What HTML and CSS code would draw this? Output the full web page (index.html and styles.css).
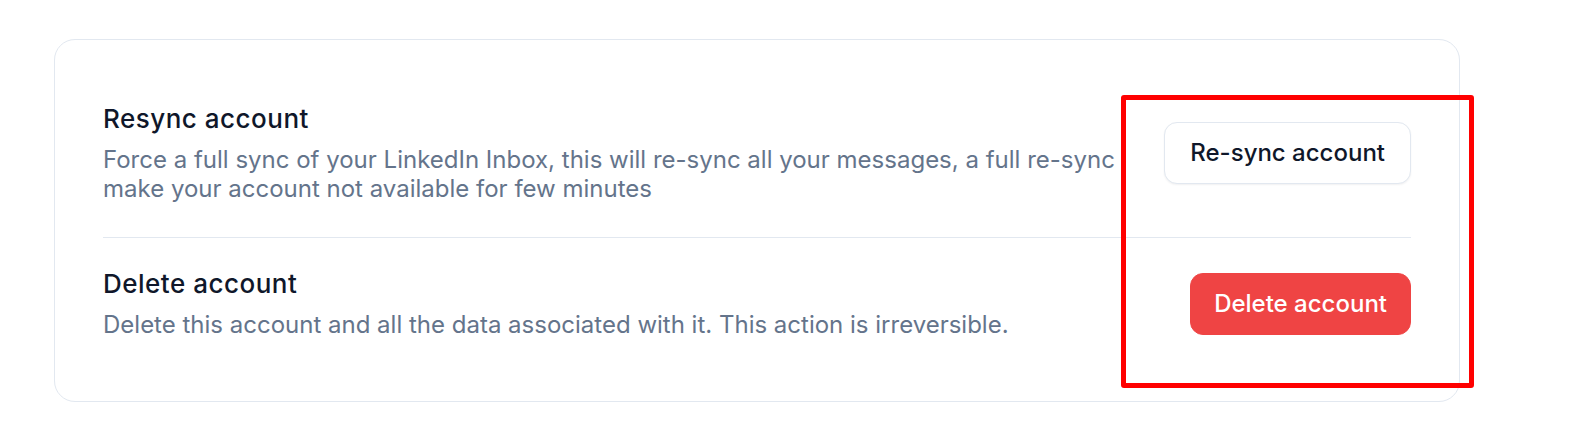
FILE: index.html
```html
<!DOCTYPE html>
<html lang="en">
<head>
<meta charset="utf-8">
<title>Account settings</title>
<link rel="stylesheet" href="styles.css">
</head>
<body>
<div class="page">
  <section class="card">
    <div class="row">
      <div class="info">
        <h3 class="title">Resync account</h3>
        <p class="desc">Force a full sync of your LinkedIn Inbox, this will re-sync all your messages, a full re-sync make your account not available for few minutes</p>
      </div>
      <button class="btn btn-outline" type="button">Re-sync account</button>
    </div>
    <div class="row row-divided">
      <div class="info">
        <h3 class="title">Delete account</h3>
        <p class="desc">Delete this account and all the data associated with it. This action is irreversible.</p>
      </div>
      <button class="btn btn-danger" type="button">Delete account</button>
    </div>
  </section>
  <div class="highlight"></div>
</div>
</body>
</html>
```

FILE: styles.css
```css
* { box-sizing: border-box; }

html, body {
  margin: 0;
  padding: 0;
  background: #ffffff;
}

body {
  font-family: Inter, "Noto Sans", "Liberation Sans", sans-serif;
  -webkit-font-smoothing: antialiased;
}

.page {
  position: relative;
  padding: 39px 0 0 54px;
  height: 434px;
}

.card {
  width: 1406px;
  border: 1px solid #e2e8f0;
  border-radius: 21px;
  padding: 33px 48px 28px 48px;
  background: #ffffff;
}

.row {
  display: flex;
  align-items: center;
  gap: 48px;
  padding: 30px 0 34px 0;
}

.row-divided {
  border-top: 1px solid #e2e8f0;
}

.info {
  flex: 1;
  min-width: 0;
}

.title {
  margin: 0;
  font-size: 26px;
  line-height: 32px;
  font-weight: 500;
  letter-spacing: 0.5px;
  color: #0f172a;
}

.desc {
  margin: 10px 0 0 0;
  font-size: 24px;
  line-height: 29px;
  font-weight: 400;
  color: #64748b;
}

.btn {
  flex: none;
  font-family: inherit;
  font-size: 24px;
  line-height: 30px;
  font-weight: 500;
  border-radius: 13px;
  padding: 15px 25px;
  cursor: pointer;
}

.btn-outline {
  background: #ffffff;
  color: #0f172a;
  border: 1px solid #e2e8f0;
  box-shadow: 0 1px 2px rgba(15, 23, 42, 0.06);
}

.btn-danger {
  background: #ef4444;
  color: #ffffff;
  border: 1px solid #ef4444;
  padding: 15px 23px;
}

.highlight {
  position: absolute;
  left: 1121px;
  top: 95px;
  width: 353px;
  height: 293px;
  border: 5px solid #ff0000;
  border-radius: 3px;
  pointer-events: none;
}
```
